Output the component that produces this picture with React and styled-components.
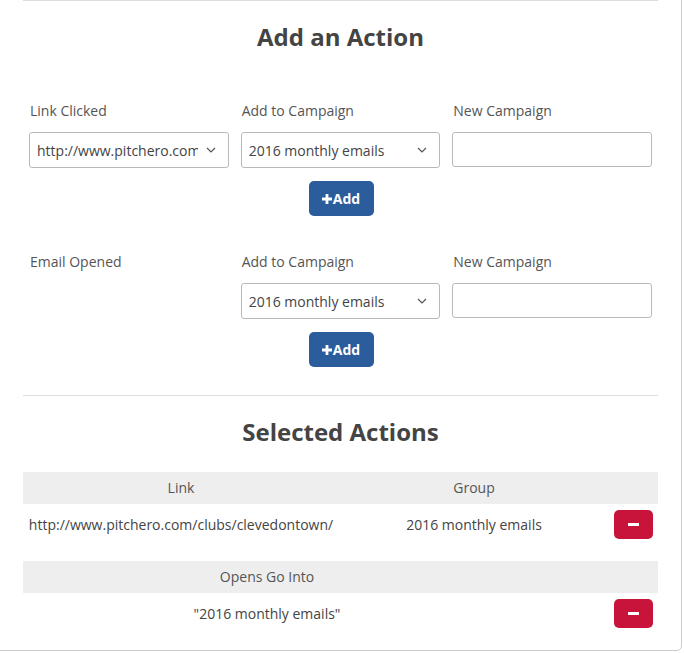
import React from "react";
import styled, { createGlobalStyle } from "styled-components";

const Global = createGlobalStyle`
  html, body { margin: 0; padding: 0; background: #fff; }
  body { font-family: "Open Sans", "Liberation Sans", sans-serif; color: #444; }
  * { box-sizing: border-box; }
`;

const Page = styled.div`
  width: 684px;
  height: 653px;
  overflow: hidden;
`;

const Card = styled.div`
  margin: -20px 0 0 -20px;
  width: 702px;
  padding: 19px 23px 16px 42px;
  border: 1px solid #cbcbcb;
  border-radius: 5px;
  background: #fff;
`;

const Divider = styled.div`
  height: 1px;
  background: #dddddd;
`;

const Title = styled.h2`
  margin: 20px 0 0;
  font-size: 24px;
  line-height: 32px;
  font-weight: 700;
  color: #444;
  text-align: center;
`;

const FormSection = styled.div`
  padding-top: 48px;
  padding-bottom: 28px;
  display: flex;
  flex-direction: column;
  gap: 36px;
`;

const ActionGroup = styled.div`
  display: grid;
  grid-template-columns: repeat(3, 1fr);
  column-gap: 12px;
  padding: 0 6px;
`;

const Field = styled.div`
  display: flex;
  flex-direction: column;
  min-width: 0;
`;

const Label = styled.div`
  font-size: 14px;
  line-height: 20px;
  color: #555;
  margin-bottom: 11px;
  padding-left: 1px;
`;

const SelectBox = styled.div`
  height: 36px;
  border: 1px solid #b9b9b9;
  border-radius: 3px;
  display: flex;
  align-items: center;
  padding: 0 12px 0 7px;
  gap: 8px;
  font-size: 14px;
  color: #444;
  background: #fff;
`;

const SelectText = styled.span`
  flex: 1;
  min-width: 0;
  white-space: nowrap;
  overflow: hidden;
`;

const TextInput = styled.div`
  height: 35px;
  border: 1px solid #b9b9b9;
  border-radius: 3px;
  background: #fff;
`;

const ButtonRow = styled.div`
  grid-column: 1 / -1;
  display: flex;
  justify-content: center;
  margin-top: 13px;
`;

const AddButton = styled.button`
  height: 35px;
  width: 65px;
  border: none;
  border-radius: 5px;
  background: #2b5c9c;
  color: #fff;
  font-family: inherit;
  font-size: 14px;
  font-weight: 700;
  display: flex;
  align-items: center;
  justify-content: center;
  gap: 1px;
  padding: 0;
  margin-left: 1px;
`;

const Table = styled.div`
  display: grid;
  grid-template-columns: ${(p) => p.$cols};
  margin-top: ${(p) => p.$mt || 0}px;
`;

const HeadCell = styled.div`
  background: #eeeeee;
  height: 32px;
  line-height: 32px;
  font-size: 14px;
  color: #555;
  text-align: center;
`;

const Cell = styled.div`
  height: 41px;
  display: flex;
  align-items: center;
  justify-content: ${(p) => p.$justify || "center"};
  padding-right: ${(p) => p.$pr || 0}px;
  font-size: 14px;
  color: #444;
  white-space: nowrap;
`;

const RemoveButton = styled.button`
  width: 39px;
  height: 29px;
  border: none;
  border-radius: 5px;
  background: #c8143b;
  padding: 0;
  display: flex;
  align-items: center;
  justify-content: center;
  &::after {
    content: "";
    width: 11px;
    height: 3px;
    background: #fff;
  }
`;

const Chevron = () => (
  <svg width="10" height="6" viewBox="0 0 10 6" fill="none">
    <path d="M1 1l4 4 4-4" stroke="#555" strokeWidth="1.2" />
  </svg>
);

const Plus = () => (
  <svg width="10" height="10" viewBox="0 0 10 10">
    <path d="M3.6 0h2.8v3.6H10v2.8H6.4V10H3.6V6.4H0V3.6h3.6z" fill="#fff" />
  </svg>
);

const Select = ({ value }) => (
  <SelectBox>
    <SelectText>{value}</SelectText>
    <Chevron />
  </SelectBox>
);

export default function App() {
  return (
    <Page>
      <Global />
      <Card>
        <Divider />
        <Title>Add an Action</Title>
        <FormSection>
          <ActionGroup>
            <Field>
              <Label>Link Clicked</Label>
              <Select value="http://www.pitchero.com/clubs/clevedontown/" />
            </Field>
            <Field>
              <Label>Add to Campaign</Label>
              <Select value="2016 monthly emails" />
            </Field>
            <Field>
              <Label>New Campaign</Label>
              <TextInput />
            </Field>
            <ButtonRow>
              <AddButton>
                <Plus />
                Add
              </AddButton>
            </ButtonRow>
          </ActionGroup>
          <ActionGroup>
            <Field>
              <Label>Email Opened</Label>
            </Field>
            <Field>
              <Label>Add to Campaign</Label>
              <Select value="2016 monthly emails" />
            </Field>
            <Field>
              <Label>New Campaign</Label>
              <TextInput />
            </Field>
            <ButtonRow>
              <AddButton>
                <Plus />
                Add
              </AddButton>
            </ButtonRow>
          </ActionGroup>
        </FormSection>
        <Divider />
        <Title>Selected Actions</Title>
        <Table $cols="316px 270px 49px" $mt={24}>
          <HeadCell>Link</HeadCell>
          <HeadCell>Group</HeadCell>
          <HeadCell />
          <Cell>http://www.pitchero.com/clubs/clevedontown/</Cell>
          <Cell>2016 monthly emails</Cell>
          <Cell>
            <RemoveButton aria-label="Remove" />
          </Cell>
        </Table>
        <Table $cols="488px 1fr" $mt={16}>
          <HeadCell>Opens Go Into</HeadCell>
          <HeadCell />
          <Cell>"2016 monthly emails"</Cell>
          <Cell $justify="flex-end" $pr={5}>
            <RemoveButton aria-label="Remove" />
          </Cell>
        </Table>
      </Card>
    </Page>
  );
}
